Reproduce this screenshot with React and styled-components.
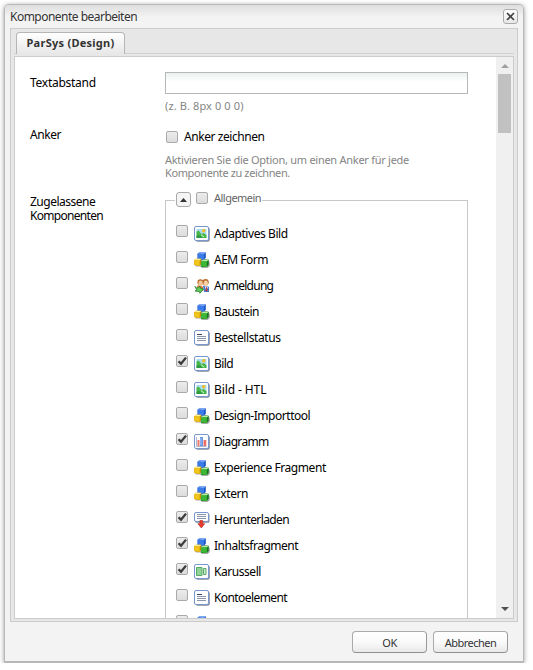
import React from "react";
import styled, { createGlobalStyle } from "styled-components";

const Global = createGlobalStyle`
  * { box-sizing: border-box; }
  html, body { margin: 0; background: #fff; overflow: hidden; }
  body { font: 12px/14px "Noto Sans", "Open Sans", sans-serif; color: #000; }
  button, input { font: inherit; }
`;

const Dialog = styled.section`
  width: 520px;
  height: 659px;
  margin: 4px 0 0 4px;
  padding: 0 5px;
  display: flex;
  flex-direction: column;
  background: #f3f3f3;
  border: 1px solid #b8b8b8;
  border-bottom-width: 2px;
  border-radius: 5px 5px 1px 1px;
  box-shadow: 0 1px 5px rgba(0, 0, 0, 0.4);
`;

const TitleBar = styled.header`
  height: 23px;
  flex: none;
  margin: 0 -5px;
  padding: 0 5px;
  display: flex;
  align-items: center;
  justify-content: space-between;
  background: linear-gradient(#dedede, #f3f3f3 12px);
  border-radius: 4px 4px 0 0;
  color: #333;
`;

const Text = styled.span`
  letter-spacing: ${(p) => p.$spacing || 0}px;
`;

const CloseButton = styled.button`
  width: 15px;
  height: 15px;
  padding: 0;
  display: grid;
  place-items: center;
  border: 1px solid #aaa;
  border-radius: 3px;
  background: linear-gradient(#fff, #e8e8e8);
`;

const Body = styled.div`
  height: 594px;
  flex: none;
  display: flex;
  flex-direction: column;
  padding: 3px 3px 2px;
  background: #e7e7e7;
  border: 1px solid #ccc;
`;

const TabBar = styled.nav`
  height: 22px;
  flex: none;
  padding-left: 2px;
  display: flex;
  border-bottom: 1px solid #d0d0d0;
`;

const Tab = styled.button`
  width: 109px;
  height: 22px;
  padding: 0 0 2px;
  border: 1px solid #b5b5b5;
  border-bottom: 0;
  border-radius: 4px 4px 0 0;
  background: linear-gradient(#fff, #e7e7e7);
  color: #333;
  font-size: 11px;
  font-weight: 700;
  white-space: nowrap;
  letter-spacing: 0.26px;
`;

const Pane = styled.div`
  flex: 1;
  min-height: 0;
  margin-top: 2px;
  display: flex;
  background: #fff;
  border: 1px solid #ccc;
  overflow: hidden;
`;

const Form = styled.div`
  width: 481px;
  padding: 15px 27px 0 15px;
  overflow: hidden;
`;

const Field = styled.div`
  display: grid;
  grid-template-columns: 135px 303px;
  height: ${(p) => p.$height}px;
`;

const Label = styled.div`
  padding-top: ${(p) => p.$top ?? 4}px;
`;

const LabelLine = styled.div`
  height: 14px;
  letter-spacing: ${(p) => p.$spacing || 0}px;
`;

const TextInput = styled.input`
  display: block;
  width: 303px;
  height: 22px;
  padding: 0 3px;
  border: 1px solid #b5b8b8;
  background: linear-gradient(#edf0f0, #fff 9px);
`;

const Hint = styled.div`
  margin-top: ${(p) => p.$top}px;
  font-size: 11px;
  line-height: 13px;
  color: #858585;
  white-space: pre;
`;

const HintLine = styled.div`
  height: 13px;
  letter-spacing: ${(p) => p.$spacing || 0}px;
`;

const CheckLine = styled.div`
  height: 26px;
  padding: 0 0 0 1px;
  display: flex;
  align-items: center;
  gap: 6px;
`;

const Check = styled.span`
  width: 12px;
  height: 12px;
  flex: none;
  display: grid;
  place-items: center;
  border: 1px solid #aaa;
  border-radius: 2px;
  background: linear-gradient(#ececec, #dcdcdc);
  svg { display: block; overflow: visible; }
`;

const Group = styled.div`
  height: 440px;
  border: 1px solid #c8c8c8;
  margin-top: 6px;
`;

const Legend = styled.div`
  width: 87px;
  height: 16px;
  margin: -9px 0 13px 9px;
  padding-left: 1px;
  display: flex;
  align-items: flex-start;
  background: #fff;
  color: #666;
  font-size: 11px;
  line-height: 12px;
  white-space: nowrap;
`;

const Toggle = styled.span`
  width: 15px;
  height: 15px;
  margin-right: 5px;
  display: grid;
  place-items: center;
  flex: none;
  border: 1px solid #aaa;
  border-radius: 3px;
  background: #f5f5f5;
`;

const LegendText = styled.span`
  margin-left: 6px;
  letter-spacing: -0.52px;
`;

const Row = styled.div`
  height: 26px;
  padding-left: 10px;
  display: flex;
  align-items: center;
  white-space: nowrap;
  ${Check} { margin: 0 6px 6px 0; }
`;

const RowText = styled.span`
  margin: 0 0 0 4px;
  letter-spacing: ${(p) => p.$spacing || 0}px;
`;

const IconBox = styled.svg`
  width: 16px;
  height: 16px;
  flex: none;
  display: block;
  overflow: visible;
`;

const ScrollBar = styled.div`
  width: 17px;
  flex: none;
  padding: 0 2px 1px;
  display: flex;
  flex-direction: column;
  align-items: center;
  background: #f0f0f0;
`;

const Arrow = styled.span`
  height: 17px;
  display: grid;
  place-items: center;
  svg { display: block; }
`;

const Thumb = styled.div`
  width: 13px;
  height: 59px;
  margin-bottom: auto;
  background: #c1c1c1;
`;

const Footer = styled.footer`
  display: flex;
  justify-content: flex-end;
  gap: 6px;
  padding: 9px 10px 0 0;
`;

const Button = styled.button`
  width: 75px;
  height: 22px;
  padding: 2px 0 0;
  border: 1px solid #aaa;
  border-bottom-color: #909090;
  border-right-color: #999;
  border-radius: 4px;
  background: linear-gradient(#fff, #fafafa 50%, #e9e9e9);
  color: #333;
  font-size: 11px;
  letter-spacing: ${(p) => p.$spacing || 0}px;
`;

const Checkbox = ({ checked }) => (
  <Check role="checkbox" aria-checked={!!checked}>
    {checked && (
      <svg width="10" height="10" viewBox="0 0 10 10">
        <path d="M1.6 5.2 4 7.8 9 1.6" fill="none" stroke="#3c3c3c" strokeWidth="2.3" />
      </svg>
    )}
  </Check>
);

const Card = () => (
  <>
    <rect x="1.6" y="1.6" width="14.2" height="14.2" rx="2" fill="#858a96" />
    <rect x="0.5" y="0.5" width="14" height="14" rx="1.5" fill="#fff" stroke="#7997cf" />
  </>
);

const icons = {
  image: (
    <>
      <Card />
      <path d="M2.5 3h10v9h-10z" fill="#a8dcf5" />
      <path d="M2.5 5.5 4.5 4.5l3 3.5 2-1 3 2V12h-10z" fill="#4ab848" />
      <path d="M2.5 10q3-3 6 2h-6z" fill="#2f9a45" />
      <path d="M7 8.6 10 11" stroke="#d9f5e0" strokeWidth="1" />
      <circle cx="9.7" cy="4.8" r="1.8" fill="#f2bd28" />
    </>
  ),
  cubes: (
    <>
      <path d="M5 7h8l2.8 3v4l-2 1.9H8L6.5 14.5H2l-1-1z" fill="#555" opacity=".5" />
      <path d="M3.6 1.6 5.4.2h6.4v5.6L10 7.8H3.6z" fill="#1c55c4" />
      <path d="M3.6 1.6 5.4.2h6.4L10 1.9z" fill="#8bb5fa" />
      <path d="M3.6 1.8H10v6H3.6z" fill="#3a7ae9" />
      <path d="m.2 8.2 1.5-1.4h5.6v5l-1.6 2.2-5.5-1z" fill="#c08b00" />
      <path d="m.2 8.2 1.5-1.4h5.6L5.7 8.6z" fill="#fff08a" />
      <path d="m.2 8.2 5.5.4V14l-5.5-1z" fill="#f2c51b" />
      <path d="m7 9.4 1.7-1.6h6v4.9L12.9 15H7z" fill="#13761c" />
      <path d="m7 9.4 1.7-1.6h6l-1.8 1.6z" fill="#b4ee9a" />
      <path d="M7 9.4h5.9V15L7 14.4z" fill="#3cb636" />
    </>
  ),
  users: (
    <>
      <path d="M9 8q3-2 6 1v5h-5z" fill="#4a78c8" />
      <path d="M3 8q3-2 6 1v4H4z" fill="#e17630" />
      <circle cx="6.4" cy="4.2" r="3" fill="#b5682c" />
      <circle cx="11.6" cy="4.2" r="3.1" fill="#b5682c" />
      <ellipse cx="6.6" cy="5.3" rx="2.1" ry="2.8" fill="#f6c69b" />
      <ellipse cx="11.8" cy="5.3" rx="2.1" ry="2.9" fill="#f9d0a6" />
      <path d="m10.8 8.6 1.6 4.2L14 8.6z" fill="#fff" />
      <path d="m12.2 9-.6 3.3.9 1.5.9-1.5-.6-3.3z" fill="#cf3530" />
      <path d="M.8 8.5 3 10.2l3-2 .3 2L9.6 11 6 15.3l-.8-1.8L1 13l1.8-1.2z" fill="#62cb58" stroke="#237b2d" strokeWidth=".8" />
    </>
  ),
  text: (
    <>
      <Card />
      <path d="M3 4.5h5" stroke="#3c485f" />
      <path d="M3 6.5h9M3 8.5h9M3 10.5h9" stroke="#8995aa" />
    </>
  ),
  chart: (
    <>
      <Card />
      <path d="M2.5 3v9.5h10" fill="none" stroke="#aab8d4" />
      <path d="M3.5 6h2v6h-2z" fill="#ec7868" />
      <path d="M6 3h3v9H6z" fill="#6795e5" />
      <path d="M9.5 6h2.8v6H9.5z" fill="#e97065" />
      <path d="M7 4v7" stroke="#a9c8fa" />
    </>
  ),
  download: (
    <>
      <rect x="1.2" y="1.4" width="14.3" height="9.4" rx="1.5" fill="#858a96" />
      <rect x=".5" y=".5" width="14" height="9" rx="1.5" fill="#fff" stroke="#7997cf" />
      <path d="M3 2.5h9M3 4.5h9M3 6.5h9" stroke="#8995aa" />
      <path d="M5.9 8.5h2.8v3.2h2L7.3 15.9l-3.4-4.2h2z" fill="#e83c2c" stroke="#ad1e18" strokeWidth=".6" />
    </>
  ),
  carousel: (
    <>
      <Card />
      <path d="M2.5 3.5H8v8H2.5z" fill="#8fd396" stroke="#58a868" />
      <path d="M9.5 4.5h2.5v6H9.5z" fill="#c9edcb" stroke="#58a868" />
    </>
  ),
};

const Icon = ({ name }) => <IconBox viewBox="0 0 16 16">{icons[name]}</IconBox>;

const rows = [
  ["Adaptives Bild", "image", false, -0.43],
  ["AEM Form", "cubes", false, -0.5],
  ["Anmeldung", "users", false, -0.72],
  ["Baustein", "cubes", false, -0.57],
  ["Bestellstatus", "text", false, -0.42],
  ["Bild", "image", true, -0.6],
  ["Bild - HTL", "image", false, -0.1],
  ["Design-Importtool", "cubes", false, -0.47],
  ["Diagramm", "chart", true, -0.65],
  ["Experience Fragment", "cubes", false, -0.42],
  ["Extern", "cubes", false, -0.4],
  ["Herunterladen", "download", true, -0.6],
  ["Inhaltsfragment", "cubes", true, -0.5],
  ["Karussell", "carousel", true, -0.45],
  ["Kontoelement", "text", false, -0.58],
  ["", "cubes", false, 0],
];

export default function App() {
  return (
    <>
      <Global />
      <Dialog>
        <TitleBar>
          <Text $spacing={-0.52}>Komponente bearbeiten</Text>
          <CloseButton aria-label="Schließen">
            <svg width="9" height="9" viewBox="0 0 9 9">
              <path d="m1 1 7 7M8 1 1 8" stroke="#444" strokeWidth="1.7" />
            </svg>
          </CloseButton>
        </TitleBar>
        <Body>
          <TabBar>
            <Tab>ParSys (Design)</Tab>
          </TabBar>
          <Pane>
            <Form>
              <Field $height={52}>
                <Label><LabelLine $spacing={-0.27}>Textabstand</LabelLine></Label>
                <div>
                  <TextInput aria-label="Textabstand" />
                  <Hint $top={5}><HintLine $spacing={0.12}>(z. B. 8px 0 0 0)</HintLine></Hint>
                </div>
              </Field>
              <Field $height={70}>
                <Label><LabelLine $spacing={-0.42}>Anker</LabelLine></Label>
                <div>
                  <CheckLine><Checkbox /><Text $spacing={-0.43}>Anker zeichnen</Text></CheckLine>
                  <Hint $top={3}>
                    <HintLine $spacing={-0.27}>Aktivieren Sie die Option, um einen Anker für jede</HintLine>
                    <HintLine $spacing={-0.39}>Komponente zu zeichnen.</HintLine>
                  </Hint>
                </div>
              </Field>
              <Field $height={446}>
                <Label $top={1}>
                  <LabelLine $spacing={-0.5}>Zugelassene</LabelLine>
                  <LabelLine $spacing={-0.7}>Komponenten</LabelLine>
                </Label>
                <Group>
                  <Legend>
                    <Toggle>
                      <svg width="7" height="4" viewBox="0 0 7 4"><path d="M0 4 3.5 0 7 4z" fill="#333" /></svg>
                    </Toggle>
                    <Checkbox />
                    <LegendText>Allgemein</LegendText>
                  </Legend>
                  {rows.map(([name, icon, checked, spacing], i) => (
                    <Row key={i}>
                      <Checkbox checked={checked} />
                      <Icon name={icon} />
                      <RowText $spacing={spacing}>{name}</RowText>
                    </Row>
                  ))}
                </Group>
              </Field>
            </Form>
            <ScrollBar>
              <Arrow><svg width="8" height="4" viewBox="0 0 8 4"><path d="M0 4 4 0l4 4z" fill="#a0a0a0" /></svg></Arrow>
              <Thumb />
              <Arrow><svg width="8" height="4" viewBox="0 0 8 4"><path d="m0 0 4 4 4-4z" fill="#505050" /></svg></Arrow>
            </ScrollBar>
          </Pane>
        </Body>
        <Footer>
          <Button $spacing={-0.4}>OK</Button>
          <Button $spacing={-0.5}>Abbrechen</Button>
        </Footer>
      </Dialog>
    </>
  );
}
